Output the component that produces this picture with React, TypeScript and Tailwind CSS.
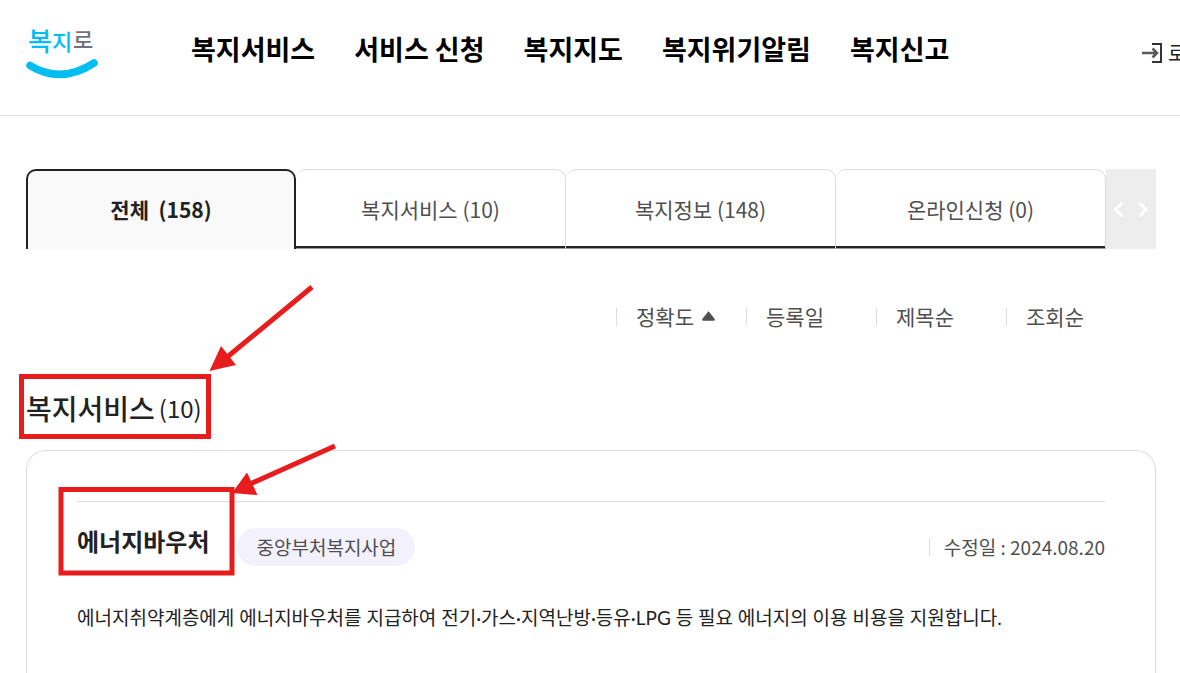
import { ChevronLeft, ChevronRight } from 'lucide-react';

const menus = ['복지서비스', '서비스 신청', '복지지도', '복지위기알림', '복지신고'];

const tabs = [
  { label: '전체', count: 158 },
  { label: '복지서비스', count: 10 },
  { label: '복지정보', count: 148 },
  { label: '온라인신청', count: 0 },
];

const sorts = ['정확도', '등록일', '제목순', '조회순'];

function Logo() {
  return (
    <svg width="76" height="66" viewBox="0 0 76 66" className="block">
      <g fontFamily="'Noto Sans CJK KR', sans-serif" fontWeight="500">
        <text x="4" y="35" fontSize="26" fill="#00bdf2">복</text>
        <text x="28" y="34" fontSize="22" fill="#00bdf2">지</text>
        <text x="49" y="32" fontSize="22" fill="#717378">로</text>
      </g>
      <path d="M6 49.500Q37 68.500 70 47" fill="none" stroke="#00bdf2" strokeWidth="7.5" strokeLinecap="round" />
    </svg>
  );
}

function LoginIcon() {
  return (
    <svg width="20" height="20" viewBox="0 0 20 20" fill="none" className="shrink-0">
      <path d="M10 1H19V19H10" stroke="#333" strokeWidth="2" />
      <path d="M0 10H15M10.500 5.500L15 10L10.500 14.500" stroke="#5a5a5a" strokeWidth="2.5" />
    </svg>
  );
}

function Header() {
  return (
    <header className="flex h-[116px] border-b border-[#ddd] pl-6">
      <a href="#" aria-label="복지로" className="mt-4 shrink-0 self-start">
        <Logo />
      </a>
      <nav className="ml-[91px] flex h-[98px] flex-1 items-center gap-[39px] text-[27px] font-bold whitespace-nowrap text-black">
        {menus.map((menu) => (
          <a key={menu} href="#">{menu}</a>
        ))}
      </nav>
      <button type="button" className="flex h-[106px] w-[38px] shrink-0 items-center gap-1.5 text-xl whitespace-nowrap text-[#222]">
        <LoginIcon />
        로그인
      </button>
    </header>
  );
}

function Tabs() {
  return (
    <div className="flex h-20">
      <div role="tablist" className="flex flex-1 text-[21px]">
        {tabs.map((tab, i) => (
          <button
            key={tab.label}
            type="button"
            role="tab"
            aria-selected={i === 0}
            className={
              i === 0
                ? 'w-1/4 rounded-t-[10px] border-2 border-b-0 border-[#222] bg-[#f9f9f9] font-bold whitespace-pre text-[#222]'
                : 'w-1/4 rounded-t-[10px] border-t border-r border-b border-[#ddd] border-b-[#999] pt-0.5 text-[#4f4f4f] shadow-[inset_0_-2px_0_#222]'
            }
          >
            {tab.label}
            {i === 0 ? '  ' : ' '}({tab.count})
          </button>
        ))}
      </div>
      <div className="flex w-[50px] items-center justify-between bg-[#ededed] px-px text-white">
        <button type="button" aria-label="이전">
          <ChevronLeft size={23} strokeWidth={3} />
        </button>
        <button type="button" aria-label="다음">
          <ChevronRight size={23} strokeWidth={3} />
        </button>
      </div>
    </div>
  );
}

function SortBar() {
  return (
    <div className="mt-[53px] mr-5 flex h-[30px] justify-end text-[21px] text-[#4f4f4f]">
      {sorts.map((sort, i) => (
        <button key={sort} type="button" className="flex w-[130px] items-center">
          <span className="mr-[19px] h-[18px] w-px bg-[#ddd]" />
          {sort}
          {i === 0 && (
            <svg width="14" height="14" viewBox="0 0 14 14" className="ml-2">
              <path d="M6.500 1.500L12.500 9Q13 10.500 11.500 10.500H1.500Q0 10.500 .5 9Z" fill="#4f4f4f" stroke="#4f4f4f" strokeWidth=".5" strokeLinejoin="round" />
            </svg>
          )}
        </button>
      ))}
    </div>
  );
}

function ServiceCard() {
  return (
    <article className="mt-5 rounded-t-[20px] border border-b-0 border-[#ddd] px-[50px] pt-[50px] pb-14">
      <div className="flex border-t border-[#ddd] pt-[26px]">
        <h3 className="text-2xl leading-[26px] font-bold text-[#222]">
          <a href="#">에너지바우처</a>
        </h3>
        <span className="ml-7 flex h-[38px] items-center rounded-full bg-[#f3f1fb] px-[19px] text-[19px] text-[#4f4f4f]">
          중앙부처복지사업
        </span>
        <p className="ml-auto flex h-[38px] items-center text-[19px] text-[#4f4f4f]">
          <span className="mr-[14px] h-[18px] w-px bg-[#ddd]" />
          수정일 : 2024.08.20
        </p>
      </div>
      <p className="mt-9 font-['Lato','Noto_Sans_CJK_KR',sans-serif] text-[19px] leading-8 text-[#222]">
        에너지취약계층에게 에너지바우처를 지급하여 전기·가스·지역난방·등유·LPG 등 필요 에너지의 이용 비용을 지원합니다.
      </p>
    </article>
  );
}

// red guide marks laid over the search result
function Guides() {
  return (
    <svg width="360" height="600" viewBox="0 0 360 600" className="pointer-events-none absolute top-0 left-0" fill="none" stroke="#e71d1d" strokeWidth="5">
      <rect x="21.500" y="376.500" width="187" height="60" />
      <rect x="61" y="489.500" width="171" height="83.500" />
      <path d="M312 287L226 358M335 446L250 484" />
      <path d="M209.500 371L221 346L236 365ZM232 493L247 472.500L257.500 495Z" fill="#e71d1d" stroke="none" />
    </svg>
  );
}

export default function App() {
  return (
    <div className="relative min-h-screen overflow-hidden bg-white font-['Noto_Sans_CJK_KR',sans-serif]">
      <Header />
      <main className="pt-[53px] pr-6 pl-[26px]">
        <Tabs />
        <SortBar />
        <section>
          <h2 className="mt-[54px] flex h-11 items-center gap-1 text-[28px] font-medium text-[#222]">
            복지서비스
            <span className="text-2xl font-normal">(10)</span>
          </h2>
          <ServiceCard />
        </section>
      </main>
      <Guides />
    </div>
  );
}
